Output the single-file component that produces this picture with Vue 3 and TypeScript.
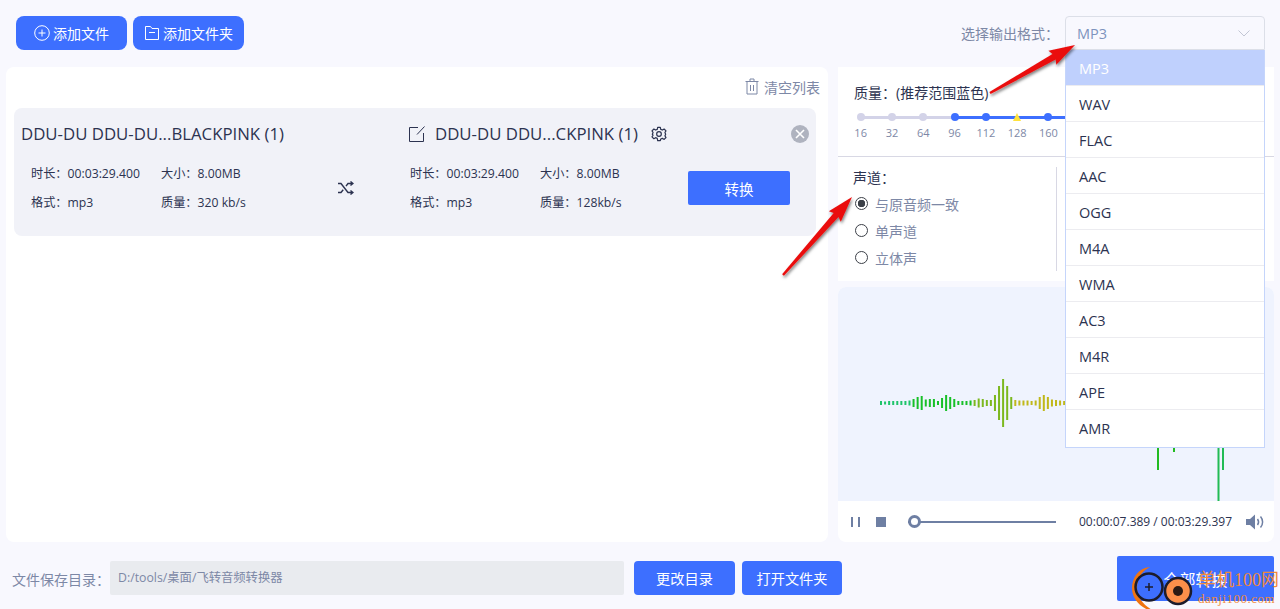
<template>
  <div class="app">
    <header class="topbar">
      <button class="btn add-btn">
        <svg width="16" height="16" viewBox="0 0 16 16" fill="none" stroke="#fff" stroke-width="1">
          <circle cx="8" cy="8" r="7.3" />
          <path d="M8 4.500v7M4.500 8h7" />
        </svg>
        <span>添加文件</span>
      </button>
      <button class="btn add-btn">
        <svg width="16" height="16" viewBox="0 0 16 16" fill="none" stroke="#fff" stroke-width="1">
          <path d="M1.500 14.500V1.500h5l1.500 2h6.500v11zM5 7.500h6" />
        </svg>
        <span>添加文件夹</span>
      </button>
      <div class="format">
        <span class="format-label">选择输出格式：</span>
        <div class="select">
          <span>MP3</span>
          <svg width="12" height="7" viewBox="0 0 12 7" fill="none" stroke="#c2c6d4" stroke-width="1">
            <path d="M.5.5 6 6 11.500.5" />
          </svg>
        </div>
      </div>
    </header>

    <main class="main">
      <section class="list-panel">
        <div class="list-head">
          <svg width="14" height="17" viewBox="0 0 14 17" fill="none" stroke="#7d88a6" stroke-width="1">
            <path d="M.5 3.500h13M2 3.500v12.500h10V3.500M5 3.500V1h4v2.500M5.500 7v6M8.500 7v6" />
          </svg>
          <span>清空列表</span>
        </div>

        <div class="file-card">
          <div class="source">
            <div class="file-name">DDU-DU DDU-DU...BLACKPINK (1)</div>
            <div class="meta">
              <span>时长：00:03:29.400</span><span>大小：8.00MB</span>
              <span>格式：mp3</span><span>质量：320 kb/s</span>
            </div>
          </div>
          <div class="shuffle">
            <svg width="16" height="14" viewBox="0 0 16 14" fill="none" stroke="#2c3350" stroke-width="1.400">
              <path d="M0 2.500h3l7 9h4M0 11.500h3l2.200-2.800M8 5.200l2-2.700h4M12.500.5l2.500 2-2.500 2M12.500 9.500l2.500 2-2.500 2" />
            </svg>
          </div>
          <div class="target">
            <div class="target-name">
              <svg width="16" height="16" viewBox="0 0 16 16" fill="none" stroke="#2c3350" stroke-width="1">
                <path d="M9 1.500H.5v14h14V7M8 8.500 15.500.5" />
              </svg>
              <span class="file-name">DDU-DU DDU...CKPINK (1)</span>
              <svg class="gear" width="16" height="16" viewBox="0 0 24 24" fill="none" stroke="#2c3350" stroke-width="1.800" stroke-linejoin="round">
                <circle cx="12" cy="12" r="3.500" />
                <path d="M10 2h4l.6 3 2.500 1.100L19.700 4.500l2.800 2.800-1.600 2.500L22 12.400v.1l-1.100 2.300 1.600 2.500-2.800 2.800-2.600-1.600-2.500 1L14 22h-4l-.6-3.500-2.500-1-2.600 1.600-2.800-2.800 1.600-2.500L2 12.500v-.1l1.100-2.600-1.600-2.500 2.800-2.800 2.600 1.600L9.400 5z" />
              </svg>
            </div>
            <div class="meta target-meta">
              <span>时长：00:03:29.400</span><span>大小：8.00MB</span>
              <span>格式：mp3</span><span>质量：128kb/s</span>
            </div>
          </div>
          <button class="btn convert-btn">转换</button>
          <span class="close-dot">
            <svg width="10" height="10" viewBox="0 0 10 10" stroke="#fff" stroke-width="1.600">
              <path d="M1 1l8 8M9 1 1 9" />
            </svg>
          </span>
        </div>
      </section>

      <aside class="side">
        <div class="settings">
          <div class="quality">
            <div class="section-title">质量：(推荐范围蓝色)</div>
            <div class="rates">
              <div v-for="(rate, i) in rates" :key="rate" class="rate" :class="{ 'rate-on': i >= 3 }">
                <span v-if="i > 0" class="rate-track" :class="{ 'track-on': i >= 4 }"></span>
                <span v-if="rate === 128" class="rate-mark"></span>
                <span v-else class="rate-dot"></span>
                <span class="rate-text">{{ rate }}</span>
              </div>
              <span class="rate-tail"></span>
            </div>
          </div>
          <div class="channels-row">
            <div class="channels">
              <div class="section-title">声道：</div>
              <label v-for="(ch, i) in channels" :key="ch" class="radio">
                <span class="radio-ring" :class="{ 'radio-on': i === 0 }"></span>
                <span>{{ ch }}</span>
              </label>
            </div>
          </div>
        </div>

        <div class="player">
          <div class="wave">
            <svg width="436" height="214" viewBox="0 0 436 214">
              <rect
                v-for="bar in bars"
                :key="bar.x"
                :x="bar.x"
                :y="116 - bar.h"
                width="2"
                :height="bar.h * 2"
                :fill="bar.color"
              />
              <rect x="319" y="150" width="2" height="33" fill="#22bb22" />
              <rect x="335" y="150" width="2" height="15" fill="#22bb22" />
              <rect x="379.500" y="150" width="2" height="64" fill="#22bb55" />
              <rect x="384" y="150" width="2" height="33" fill="#22bb55" />
            </svg>
          </div>
          <div class="controls">
            <span class="pause"></span>
            <span class="stop"></span>
            <div class="progress"><span class="thumb"></span></div>
            <span class="time">00:00:07.389 / 00:03:29.397</span>
            <svg width="20" height="16" viewBox="0 0 20 16" fill="none">
              <path d="M0 5h4l5-4.500v15L4 11H0z" fill="#6e7fa3" />
              <path d="M11.500 5c1.300 1.800 1.300 4.200 0 6M14.500 2.500c2.800 3.200 2.800 7.800 0 11" stroke="#6e7fa3" stroke-width="1.500" />
            </svg>
          </div>
        </div>
      </aside>
    </main>

    <footer class="footer">
      <span class="dir-label">文件保存目录：</span>
      <div class="dir-input">D:/tools/桌面/飞转音频转换器</div>
      <button class="btn foot-btn">更改目录</button>
      <button class="btn foot-btn">打开文件夹</button>
      <button class="btn all-btn">全部转换</button>
    </footer>

    <ul class="dropdown">
      <li v-for="(fmt, i) in formats" :key="fmt" :class="{ active: i === 0 }">{{ fmt }}</li>
    </ul>

    <svg class="arrows" width="1280" height="609" viewBox="0 0 1280 609">
      <defs>
        <filter id="arrow-shadow" x="-20%" y="-20%" width="140%" height="140%">
          <feDropShadow dx="1" dy="2" stdDeviation="1.500" flood-color="#000" flood-opacity="0.5" />
        </filter>
      </defs>
      <polygon :points="arrow(990, 93, 1075, 45)" fill="#ea1010" filter="url(#arrow-shadow)" />
      <polygon :points="arrow(783, 275, 852, 197)" fill="#ea1010" filter="url(#arrow-shadow)" />
    </svg>

    <div class="watermark">
      <svg width="70" height="48" viewBox="0 0 70 48" fill="none">
        <path d="M20 1C8 2 2 12 2 22c0 12 10 22 26 25-11-5-21-13-21-25C7 12 12 5 20 1z" fill="#f07410" />
        <circle cx="19" cy="21" r="13.500" stroke="#1c1c2c" stroke-width="2.500" />
        <path d="M15 21h8M19 17v8" stroke="#1c1c2c" stroke-width="1.500" />
        <circle cx="48" cy="25" r="13" fill="#fb8f4a" stroke="#1c1c2c" stroke-width="2.500" />
        <circle cx="48" cy="25" r="5" fill="#2a1a14" />
      </svg>
      <div class="wm-text">
        <span class="wm-cn">单机100网</span>
        <span class="wm-en">danji100.com</span>
      </div>
    </div>
  </div>
</template>

<script setup lang="ts">
interface Bar {
  x: number;
  h: number;
  color: string;
}

const rates = [16, 32, 64, 96, 112, 128, 160];
const channels = ['与原音频一致', '单声道', '立体声'];
const formats = ['MP3', 'WAV', 'FLAC', 'AAC', 'OGG', 'M4A', 'WMA', 'AC3', 'M4R', 'APE', 'AMR'];

const heights = [
  2, 1.500, 2, 2, 2, 2, 2, 2.500, 4, 6, 7, 3.500, 4, 4, 2, 5, 8, 6, 4, 2, 2, 2, 2.500, 3, 4.500, 4, 3, 3, 8,
  17, 24, 17, 6, 3, 2.500, 2.500, 2.500, 2, 2.500, 6, 8, 6, 3.500, 3, 2.500, 2,
];

function barColor(i: number): string {
  if (i < 8) return '#1ec46a';
  if (i < 23) return '#18c028';
  if (i < 33) return '#7cb81f';
  return '#c0b81a';
}

const bars: Bar[] = heights.map((h, i) => ({
  x: 42 + i * 4.07,
  h,
  color: barColor(i),
}));

// Points of a tapered arrow running from the tail to the tip.
function arrow(x1: number, y1: number, x2: number, y2: number): string {
  const dx = x2 - x1;
  const dy = y2 - y1;
  const len = Math.hypot(dx, dy);
  const ux = dx / len;
  const uy = dy / len;
  const px = -uy;
  const py = ux;
  const neck = len - 21;
  const at = (along: number, side: number) =>
    `${(x1 + ux * along + px * side).toFixed(1)},${(y1 + uy * along + py * side).toFixed(1)}`;
  return [at(0, 1.2), at(neck - 3, 3.2), at(neck - 5, 8), at(len, 0), at(neck - 5, -8), at(neck - 3, -3.2), at(0, -1.2)].join(' ');
}
</script>

<style>
html,
body {
  margin: 0;
  background: #f8f8fe;
}
</style>

<style scoped>
* {
  box-sizing: border-box;
}

.app {
  position: relative;
  width: 1280px;
  height: 609px;
  overflow: hidden;
  background: #f8f8fe;
  color: #2c3350;
  font-family: "Open Sans", "Noto Sans CJK SC", sans-serif;
  font-size: 12.2px;
}

.btn {
  border: none;
  background: #3d6fff;
  color: #fff;
  font-family: inherit;
  font-size: 14px;
  display: flex;
  align-items: center;
  justify-content: center;
  padding: 0;
}

.topbar {
  height: 67px;
  padding: 16px 15px 0 16px;
  display: flex;
  align-items: flex-start;
  gap: 6px;
}

.add-btn {
  width: 111px;
  height: 34px;
  border-radius: 8px;
  gap: 3px;
}

.format {
  margin-left: auto;
  display: flex;
  align-items: center;
  height: 34px;
}

.format-label {
  color: #7d88a6;
  font-size: 14px;
  margin-right: 6px;
}

.select {
  width: 200px;
  height: 34px;
  border: 1px solid #dcdfe8;
  border-radius: 4px 4px 0 0;
  padding: 0 14px 0 11px;
  display: flex;
  align-items: center;
  justify-content: space-between;
  color: #7d93bd;
  font-size: 14.500px;
}

.main {
  height: 475px;
  padding-left: 6px;
  display: flex;
  gap: 10px;
}

.list-panel {
  width: 822px;
  background: #fff;
  border-radius: 8px;
  padding: 0 8px;
}

.list-head {
  height: 41px;
  padding-top: 11px;
  display: flex;
  justify-content: flex-end;
  align-items: flex-start;
  gap: 5px;
  color: #7d88a6;
  font-size: 14px;
  line-height: 20px;
}

.file-card {
  position: relative;
  width: 802px;
  height: 128px;
  background: #f1f2f8;
  border-radius: 8px;
  padding-left: 7px;
  display: flex;
}

.file-name {
  font-size: 16.800px;
  line-height: 20px;
  white-space: nowrap;
}

.source {
  width: 310px;
  padding-top: 16px;
}

.meta {
  display: grid;
  grid-template-columns: 130px auto;
  row-gap: 12px;
  margin: 21px 0 0 10px;
  line-height: 17px;
}

.shuffle {
  width: 78px;
  padding-top: 73px;
  padding-left: 7px;
}

.target {
  width: 279px;
  padding-top: 16px;
}

.target-name {
  display: flex;
  align-items: center;
  gap: 10px;
  height: 20px;
}

.gear {
  margin-left: 3px;
}

.target-meta {
  margin-left: 1px;
}

.convert-btn {
  width: 102px;
  height: 34px;
  margin-top: 63px;
  border-radius: 2px;
  font-size: 14.500px;
}

.close-dot {
  position: absolute;
  top: 17px;
  right: 7px;
  width: 18px;
  height: 18px;
  border-radius: 50%;
  background: #afb3bf;
  display: flex;
  align-items: center;
  justify-content: center;
}

.side {
  width: 436px;
  display: flex;
  flex-direction: column;
  gap: 6px;
}

.settings {
  height: 214px;
  background: #fff;
}

.quality {
  height: 90px;
  padding: 16px 0 0 16px;
  border-bottom: 1px solid #d8d8e4;
}

.section-title {
  font-size: 14px;
  line-height: 20px;
  color: #2c3350;
}

.rates {
  display: flex;
  margin-top: 10px;
  margin-left: -9px;
}

.rate {
  position: relative;
  width: 31.300px;
  height: 36px;
  display: flex;
  flex-direction: column;
  align-items: center;
  flex-shrink: 0;
}

.rate-track {
  position: absolute;
  top: 3px;
  left: -50%;
  width: 100%;
  height: 3px;
  background: #d3d3e8;
}

.track-on {
  background: #3d6fff;
}

.rate-tail {
  width: 20px;
  height: 3px;
  margin-top: 3px;
  margin-left: -16px;
  background: #3d6fff;
}

.rate-dot {
  position: relative;
  z-index: 1;
  width: 8px;
  height: 8px;
  border-radius: 50%;
  background: #d3d3e8;
}

.rate-on .rate-dot {
  background: #3d6fff;
}

.rate-mark {
  position: relative;
  z-index: 1;
  width: 0;
  height: 8px;
  border-left: 4px solid transparent;
  border-right: 4px solid transparent;
  border-bottom: 8px solid #ffe23c;
}

.rate-text {
  margin-top: 4px;
  font-size: 11px;
  line-height: 16px;
  color: #7d88a6;
}

.channels-row {
  padding: 10px 0 0 15px;
}

.channels {
  width: 204px;
  height: 104px;
  border-right: 1px solid #d8d8e4;
  padding-top: 1px;
}

.channels .section-title {
  margin-bottom: 2px;
}

.radio {
  display: flex;
  align-items: center;
  gap: 7px;
  height: 27px;
  color: #7d88a6;
  font-size: 14px;
  margin-left: 2px;
}

.radio-ring {
  width: 13px;
  height: 13px;
  border: 1px solid #3c4048;
  border-radius: 50%;
  background: #fff;
}

.radio-on {
  background: radial-gradient(circle, #3c4048 0 3.500px, #fff 4px);
}

.player {
  flex: 1;
  display: flex;
  flex-direction: column;
  border-radius: 8px;
  overflow: hidden;
  background: #fff;
}

.wave {
  height: 214px;
  background: #eff3fe;
}

.wave svg {
  display: block;
}

.controls {
  flex: 1;
  display: flex;
  align-items: center;
  padding-left: 13px;
}

.pause {
  width: 9px;
  height: 10px;
  border-left: 2px solid #6e7fa3;
  border-right: 2px solid #6e7fa3;
}

.stop {
  width: 10px;
  height: 10px;
  margin-left: 16px;
  background: #6e7fa3;
}

.progress {
  position: relative;
  width: 148px;
  height: 2px;
  margin-left: 22px;
  background: #6e7fa3;
}

.thumb {
  position: absolute;
  left: 0;
  top: -6px;
  width: 13px;
  height: 13px;
  border: 3px solid #6e7fa3;
  border-radius: 50%;
  background: #fff;
}

.time {
  margin-left: 23px;
  margin-right: 13px;
  width: 154px;
  white-space: nowrap;
  font-size: 12px;
}

.footer {
  flex: 1;
  height: 67px;
  padding: 19px 6px 0 12px;
  display: flex;
  align-items: flex-start;
}

.dir-label {
  width: 98px;
  line-height: 38px;
  color: #7d88a6;
  font-size: 14px;
  white-space: nowrap;
}

.dir-input {
  width: 514px;
  height: 34px;
  border-radius: 2px;
  background: #e9ebef;
  color: #7d88a6;
  padding-left: 8px;
  line-height: 33px;
  font-size: 12.300px;
}

.foot-btn {
  height: 34px;
  border-radius: 4px;
  font-size: 14.200px;
}

.foot-btn:nth-of-type(1) {
  width: 101px;
  margin-left: 10px;
}

.foot-btn:nth-of-type(2) {
  width: 100px;
  margin-left: 7px;
}

.all-btn {
  width: 157px;
  height: 45px;
  margin-left: auto;
  margin-top: -5px;
  border-radius: 2px;
  font-size: 16px;
}

.dropdown {
  position: absolute;
  left: 1065px;
  top: 50px;
  width: 200px;
  margin: 0;
  padding: 0 0 1px;
  list-style: none;
  background: #fff;
  border: 1px solid #c5d5fb;
  border-top: none;
}

.dropdown li {
  height: 36px;
  padding-left: 13px;
  line-height: 37px;
  font-size: 14.500px;
  border-bottom: 1px solid #ececf0;
}

.dropdown li:last-child {
  border-bottom: none;
}

.dropdown .active {
  background: #bfd0fd;
  color: #fff;
}

.arrows {
  position: absolute;
  inset: 0;
  pointer-events: none;
}

.watermark {
  position: absolute;
  left: 1130px;
  top: 566px;
  display: flex;
  pointer-events: none;
}

.wm-text {
  display: flex;
  flex-direction: column;
  margin-left: -2px;
  margin-top: 5px;
  color: #f08a3c;
  font-family: "Liberation Serif", "Noto Sans CJK SC", serif;
  white-space: nowrap;
}

.wm-cn {
  font-size: 18px;
  line-height: 19px;
}

.wm-en {
  font-size: 13px;
  line-height: 17px;
  letter-spacing: 0.500px;
}
</style>
